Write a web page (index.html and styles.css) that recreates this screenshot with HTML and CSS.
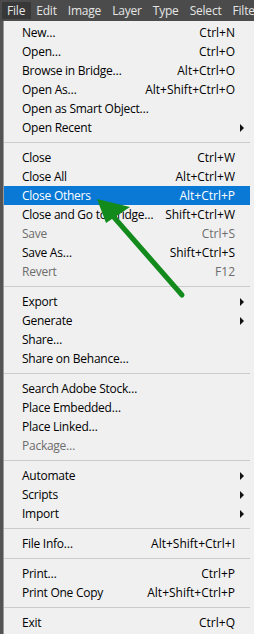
FILE: index.html
```html
<!DOCTYPE html>
<html lang="en">
<head>
  <meta charset="UTF-8">
  <meta name="viewport" content="width=device-width, initial-scale=1.0">
  <title>File Menu</title>
  <link rel="stylesheet" href="styles.css">
</head>
<body>

  <div class="menubar">
    <span class="top-item active">File</span>
    <span class="top-item">Edit</span>
    <span class="top-item">Image</span>
    <span class="top-item">Layer</span>
    <span class="top-item">Type</span>
    <span class="top-item">Select</span>
    <span class="top-item">Filter</span>
  </div>

  <div class="menu">
    <div class="item"><span class="label">New…</span><span class="key">Ctrl+N</span><span class="sub"></span></div>
    <div class="item"><span class="label">Open…</span><span class="key">Ctrl+O</span><span class="sub"></span></div>
    <div class="item"><span class="label">Browse in Bridge…</span><span class="key">Alt+Ctrl+O</span><span class="sub"></span></div>
    <div class="item"><span class="label">Open As…</span><span class="key">Alt+Shift+Ctrl+O</span><span class="sub"></span></div>
    <div class="item"><span class="label">Open as Smart Object…</span><span class="key"></span><span class="sub"></span></div>
    <div class="item"><span class="label">Open Recent</span><span class="key"></span><span class="sub"><i class="arrow"></i></span></div>
    <div class="sep"></div>
    <div class="item"><span class="label">Close</span><span class="key">Ctrl+W</span><span class="sub"></span></div>
    <div class="item"><span class="label">Close All</span><span class="key">Alt+Ctrl+W</span><span class="sub"></span></div>
    <div class="item selected"><span class="label">Close Others</span><span class="key">Alt+Ctrl+P</span><span class="sub"></span></div>
    <div class="item"><span class="label">Close and Go to Bridge…</span><span class="key">Shift+Ctrl+W</span><span class="sub"></span></div>
    <div class="item disabled"><span class="label">Save</span><span class="key">Ctrl+S</span><span class="sub"></span></div>
    <div class="item"><span class="label">Save As…</span><span class="key">Shift+Ctrl+S</span><span class="sub"></span></div>
    <div class="item disabled"><span class="label">Revert</span><span class="key">F12</span><span class="sub"></span></div>
    <div class="sep"></div>
    <div class="item"><span class="label">Export</span><span class="key"></span><span class="sub"><i class="arrow"></i></span></div>
    <div class="item"><span class="label">Generate</span><span class="key"></span><span class="sub"><i class="arrow"></i></span></div>
    <div class="item"><span class="label">Share…</span><span class="key"></span><span class="sub"></span></div>
    <div class="item"><span class="label">Share on Behance…</span><span class="key"></span><span class="sub"></span></div>
    <div class="sep"></div>
    <div class="item"><span class="label">Search Adobe Stock…</span><span class="key"></span><span class="sub"></span></div>
    <div class="item"><span class="label">Place Embedded…</span><span class="key"></span><span class="sub"></span></div>
    <div class="item"><span class="label">Place Linked…</span><span class="key"></span><span class="sub"></span></div>
    <div class="item disabled"><span class="label">Package…</span><span class="key"></span><span class="sub"></span></div>
    <div class="sep"></div>
    <div class="item"><span class="label">Automate</span><span class="key"></span><span class="sub"><i class="arrow"></i></span></div>
    <div class="item"><span class="label">Scripts</span><span class="key"></span><span class="sub"><i class="arrow"></i></span></div>
    <div class="item"><span class="label">Import</span><span class="key"></span><span class="sub"><i class="arrow"></i></span></div>
    <div class="sep"></div>
    <div class="item"><span class="label">File Info…</span><span class="key">Alt+Shift+Ctrl+I</span><span class="sub"></span></div>
    <div class="sep"></div>
    <div class="item"><span class="label">Print…</span><span class="key">Ctrl+P</span><span class="sub"></span></div>
    <div class="item"><span class="label">Print One Copy</span><span class="key">Alt+Shift+Ctrl+P</span><span class="sub"></span></div>
    <div class="sep"></div>
    <div class="item"><span class="label">Exit</span><span class="key">Ctrl+Q</span><span class="sub"></span></div>

    <!-- green pointer drawn over the menu -->
    <svg class="pointer" width="254" height="634" viewBox="0 0 254 634">
      <line x1="182" y1="295" x2="112" y2="215" stroke="#138a1c" stroke-width="5" stroke-linecap="round"/>
      <polygon points="97,199 130,207 106,223" fill="#138a1c"/>
    </svg>
  </div>

</body>
</html>
```

FILE: styles.css
```css
body {
  margin: 0;
  padding: 0;
  width: 254px;
  height: 634px;
  overflow: hidden;
  background-color: #535353;
  font-family: "Open Sans", "Noto Sans", sans-serif;
}

.menubar {
  height: 21px;
  display: flex;
  align-items: center;
  padding-left: 2px;
  background-color: #4b4b4b;
  color: #e6e6e6;
  font-size: 12px;
  letter-spacing: -0.2px;
  white-space: nowrap;
}

.top-item {
  padding: 0 6px 0 5px;
  line-height: 17px;
}

.top-item.active {
  background-color: #383838;
}

.menu {
  margin-left: 3px;
  width: 251px;
  height: 613px;
  box-sizing: border-box;
  padding: 2px 4px 0 0;
  border-left: 1px solid #9a9a9a;
  background-color: #f0f0f0;
  color: #000;
  font-size: 12px;
}

.item {
  height: 19px;
  display: flex;
  align-items: center;
  padding: 0 6px 0 18px;
  white-space: nowrap;
}

.label {
  flex: 1;
  letter-spacing: -0.25px;
}

.key {
  text-align: right;
}

.sub {
  width: 9px;
  display: flex;
  justify-content: flex-end;
}

.arrow {
  width: 0;
  height: 0;
  border-left: 4px solid #111;
  border-top: 4px solid transparent;
  border-bottom: 4px solid transparent;
}

.item.selected {
  background-color: #0a79d6;
  color: #fff;
}

.item.disabled {
  color: #6d6d6d;
}

.sep {
  height: 1px;
  margin: 5px 0;
  background-color: #cbcbcb;
}

.pointer {
  position: absolute;
  left: 0;
  top: 0;
}
```
